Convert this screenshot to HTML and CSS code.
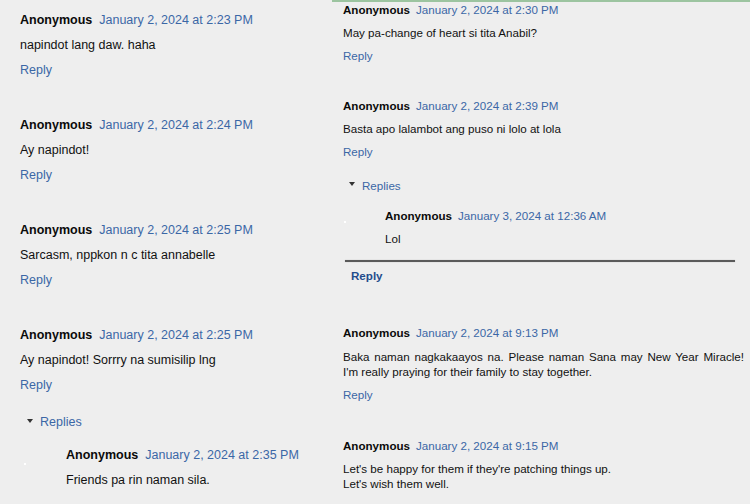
FILE: index.html
```html
<!DOCTYPE html>
<html lang="tl">
<head>
<meta charset="utf-8">
<title>Comments</title>
<link rel="stylesheet" href="styles.css">
</head>
<body>
<div class="page">
  <section class="col col-left">
    <article class="comment">
      <div class="head"><span class="author">Anonymous</span><a class="date">January 2, 2024 at 2:23 PM</a></div>
      <p class="body">napindot lang daw. haha</p>
      <a class="reply">Reply</a>
    </article>
    <article class="comment">
      <div class="head"><span class="author">Anonymous</span><a class="date">January 2, 2024 at 2:24 PM</a></div>
      <p class="body">Ay napindot!</p>
      <a class="reply">Reply</a>
    </article>
    <article class="comment">
      <div class="head"><span class="author">Anonymous</span><a class="date">January 2, 2024 at 2:25 PM</a></div>
      <p class="body">Sarcasm, nppkon n c tita annabelle</p>
      <a class="reply">Reply</a>
    </article>
    <article class="comment last">
      <div class="head"><span class="author">Anonymous</span><a class="date">January 2, 2024 at 2:25 PM</a></div>
      <p class="body">Ay napindot! Sorrry na sumisilip lng</p>
      <a class="reply">Reply</a>
      <div class="thread">
        <div class="toggle"><span class="tri"></span><a class="toggle-link">Replies</a></div>
        <div class="nested">
          <span class="avatar"></span>
          <article class="comment child">
            <div class="head"><span class="author">Anonymous</span><a class="date">January 2, 2024 at 2:35 PM</a></div>
            <p class="body">Friends pa rin naman sila.</p>
          </article>
        </div>
      </div>
    </article>
  </section>

  <section class="col col-right">
    <article class="comment first">
      <div class="head"><span class="author">Anonymous</span><a class="date">January 2, 2024 at 2:30 PM</a></div>
      <p class="body">May pa-change of heart si tita Anabil?</p>
      <a class="reply">Reply</a>
    </article>
    <article class="comment">
      <div class="head"><span class="author">Anonymous</span><a class="date">January 2, 2024 at 2:39 PM</a></div>
      <p class="body">Basta apo lalambot ang puso ni lolo at lola</p>
      <a class="reply">Reply</a>
      <div class="thread">
        <div class="toggle"><span class="tri"></span><a class="toggle-link">Replies</a></div>
        <div class="nested">
          <span class="avatar"></span>
          <article class="comment child">
            <div class="head"><span class="author">Anonymous</span><a class="date">January 3, 2024 at 12:36 AM</a></div>
            <p class="body">Lol</p>
          </article>
        </div>
        <div class="divider"></div>
        <a class="thread-reply">Reply</a>
      </div>
    </article>
    <article class="comment">
      <div class="head"><span class="author">Anonymous</span><a class="date">January 2, 2024 at 9:13 PM</a></div>
      <p class="body justify">Baka naman nagkakaayos na. Please naman Sana may New Year Miracle! I'm really praying for their family to stay together.</p>
      <a class="reply">Reply</a>
    </article>
    <article class="comment">
      <div class="head"><span class="author">Anonymous</span><a class="date">January 2, 2024 at 9:15 PM</a></div>
      <p class="body">Let's be happy for them if they're patching things up.<br>Let's wish them well.</p>
    </article>
  </section>
</div>
</body>
</html>
```

FILE: styles.css
```css
html, body {
  margin: 0;
  padding: 0;
  background: #eeeeee;
}

body {
  font-family: "Liberation Sans", Arial, sans-serif;
  color: #111111;
  width: 750px;
  height: 504px;
  overflow: hidden;
}

.page {
  display: flex;
  align-items: flex-start;
  height: 504px;
}

.col {
  display: flex;
  flex-direction: column;
  box-sizing: border-box;
}

a {
  text-decoration: none;
  cursor: pointer;
}

.head {
  display: flex;
  align-items: baseline;
  white-space: nowrap;
}

.author {
  font-weight: bold;
  color: #0a0a0a;
}

.date,
.reply,
.toggle-link {
  color: #3b67a6;
}

.body {
  margin: 0;
}

.reply {
  display: block;
}

.toggle {
  display: flex;
  align-items: center;
}

.tri {
  width: 0;
  height: 0;
  border-left: 3px solid transparent;
  border-right: 3px solid transparent;
  border-top: 4px solid #333333;
  margin-top: -3px;
}

.nested {
  display: flex;
  align-items: flex-start;
}

.avatar {
  width: 2px;
  height: 2px;
  background: #ffffff;
  flex: none;
}

/* ---------- left column ---------- */
.col-left {
  width: 332px;
  padding: 8px 0 0 20px;
  font-size: 12.5px;
  line-height: 25px;
}

.col-left .head {
  gap: 7px;
}

.col-left .comment {
  margin-bottom: 30px;
}

.col-left .comment.last,
.col-left .comment.child {
  margin-bottom: 0;
}

.col-left .toggle {
  margin-top: 12px;
  padding-left: 7px;
  gap: 7px;
}

.col-left .nested {
  margin-top: 8px;
}

.col-left .avatar {
  margin: 20px 40px 0 4px;
}

/* ---------- right column ---------- */
.col-right {
  flex: 1;
  border-top: 2px solid #9cc4a0;
  padding-left: 11px;
  font-size: 11.6px;
  line-height: 23px;
}

.col-right .head {
  gap: 6px;
}

.col-right .body {
  line-height: 15px;
  padding: 4px 0;
}

.col-right .body.justify {
  width: 401px;
  text-align: justify;
  padding-top: 5px;
}

.col-right .comment {
  margin-bottom: 28px;
}

.col-right .comment.first {
  margin-top: -4.5px;
  margin-bottom: 27px;
}

.col-right .comment.child {
  margin-bottom: 0;
}

.col-right .toggle {
  margin-top: 11px;
  padding-left: 6px;
  gap: 7px;
}

.col-right .nested {
  margin-top: 7px;
}

.col-right .avatar {
  margin: 17px 39px 0 1px;
}

.divider {
  height: 2px;
  background: #5a5a5a;
  margin: 10.5px 15px 0 2px;
  box-shadow: 0 0 1px #9a9a9a;
}

.thread-reply {
  display: block;
  margin: 1.5px 0 6px 8px;
  font-weight: bold;
  color: #234c8c;
}
```
